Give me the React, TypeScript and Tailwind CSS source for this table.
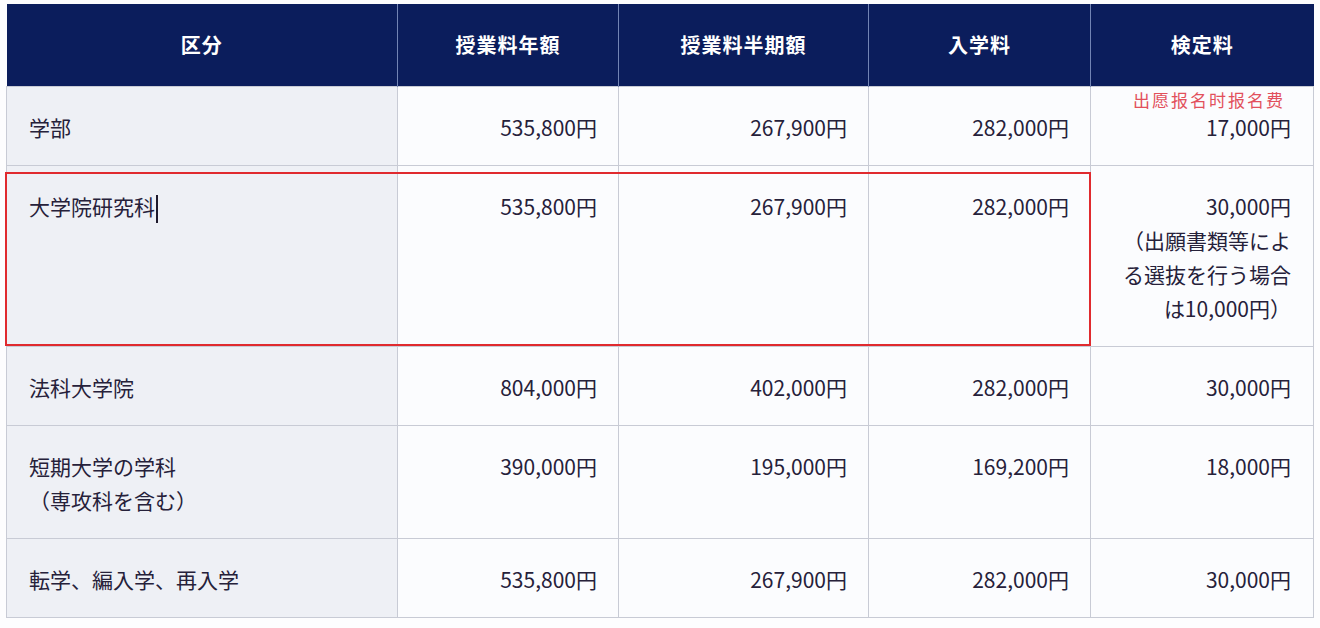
import React from 'react';

interface FeeRow {
  label: React.ReactNode;
  annual: string;
  half: string;
  entrance: string;
  exam: React.ReactNode;
}

const rows: FeeRow[] = [
  {
    label: '学部',
    annual: '535,800円',
    half: '267,900円',
    entrance: '282,000円',
    exam: (
      <div className="relative">
        <span className="absolute right-[6px] top-[-20px] whitespace-nowrap text-[17px] leading-[20px] tracking-[2px] text-[#e2505c] [font-family:'Noto_Sans_CJK_SC',sans-serif]">
          出愿报名时报名费
        </span>
        17,000円
      </div>
    ),
  },
  {
    label: (
      <>
        大学院研究科
        <span className="ml-[1px] inline-block h-[28px] w-[2px] bg-[#1e1a2c] align-middle" />
      </>
    ),
    annual: '535,800円',
    half: '267,900円',
    entrance: '282,000円',
    exam: (
      <>
        30,000円
        <br />
        （出願書類等によ
        <br />
        る選抜を行う場合
        <br />
        は10,000円）
      </>
    ),
  },
  { label: '法科大学院', annual: '804,000円', half: '402,000円', entrance: '282,000円', exam: '30,000円' },
  {
    label: (
      <>
        短期大学の学科
        <br />
        （専攻科を含む）
      </>
    ),
    annual: '390,000円',
    half: '195,000円',
    entrance: '169,200円',
    exam: '18,000円',
  },
  { label: '転学、編入学、再入学', annual: '535,800円', half: '267,900円', entrance: '282,000円', exam: '30,000円' },
];

const headers = ['区分', '授業料年額', '授業料半期額', '入学料', '検定料'];
const widths = ['w-[391px]', 'w-[221px]', 'w-[250px]', 'w-[222px]', 'w-[223px]'];

export default function App() {
  return (
    <div className="min-h-screen w-[1320px] bg-[#fdfdfe] pl-[6px] pt-[4px] [font-family:'Noto_Sans_CJK_JP','Noto_Sans',sans-serif]">
      <div className="relative w-[1307px]">
        <table className="w-full table-fixed border-collapse text-[21px] leading-[34px] text-[#26213a]">
          <colgroup>
            {widths.map((w, i) => (
              <col key={i} className={w} />
            ))}
          </colgroup>
          <thead>
            <tr className="h-[82px] bg-[#0b1d5c]">
              {headers.map((h, i) => (
                <th
                  key={h}
                  className={`text-center align-middle text-[20px] font-bold tracking-[1px] text-white ${
                    i > 0 ? 'border-l border-l-[#7284b4]' : ''
                  }`}
                >
                  {h}
                </th>
              ))}
            </tr>
          </thead>
          <tbody>
            {rows.map((r, i) => (
              <tr key={i}>
                <td className="border border-[#c8cbd5] bg-[#eef0f5] pb-[21px] pl-[22px] pt-[23px] align-top">
                  {r.label}
                </td>
                <td className="border border-[#c8cbd5] bg-[#fbfcfe] pb-[21px] pr-[21px] pt-[23px] text-right align-top">
                  {r.annual}
                </td>
                <td className="border border-[#c8cbd5] bg-[#fbfcfe] pb-[21px] pr-[21px] pt-[23px] text-right align-top">
                  {r.half}
                </td>
                <td className="border border-[#c8cbd5] bg-[#fbfcfe] pb-[21px] pr-[21px] pt-[23px] text-right align-top">
                  {r.entrance}
                </td>
                <td className="border border-[#c8cbd5] bg-[#fbfcfe] pb-[21px] pr-[22px] pt-[23px] text-right align-top">
                  {r.exam}
                </td>
              </tr>
            ))}
          </tbody>
        </table>

        {/* highlight box around the graduate school row */}
        <div className="pointer-events-none absolute left-[-1px] top-[168px] h-[174px] w-[1086px] border-2 border-[#e02a2e]" />
      </div>
    </div>
  );
}
